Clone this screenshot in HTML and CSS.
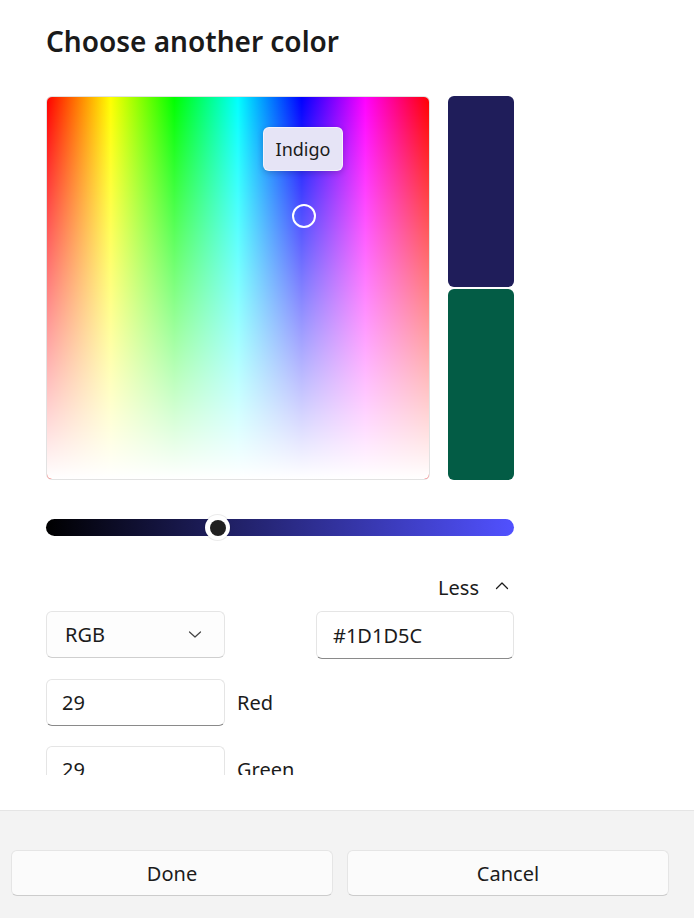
FILE: index.html
```html
<!DOCTYPE html>
<html lang="en">
<head>
<meta charset="utf-8">
<title>Choose another color</title>
<link rel="stylesheet" href="styles.css">
</head>
<body>
<div class="dialog">
  <div class="scroll">
    <div class="content">
      <h1 class="title">Choose another color</h1>
      <div class="picker">
        <div class="spectrum">
          <div class="spectrum-white"></div>
          <div class="tooltip">Indigo</div>
          <div class="marker"></div>
        </div>
        <div class="swatches">
          <div class="swatch swatch-new"></div>
          <div class="swatch swatch-old"></div>
        </div>
      </div>
      <div class="slider">
        <div class="thumb" style="left:36.75%"><div class="thumb-dot"></div></div>
      </div>
      <div class="less-row">
        <span class="less-label">Less</span>
        <svg class="chev-up" width="14" height="9" viewBox="0 0 14 9"><path d="M1.5 7.5 L7 2 L12.5 7.5" fill="none" stroke="#1b1b1b" stroke-width="1.3" stroke-linecap="round" stroke-linejoin="round"/></svg>
      </div>
      <div class="format-row">
        <div class="dropdown">
          <span>RGB</span>
          <svg class="chev-down" width="14" height="9" viewBox="0 0 14 9"><path d="M1.5 2 L7 7 L12.5 2" fill="none" stroke="#444" stroke-width="1.2" stroke-linecap="round" stroke-linejoin="round"/></svg>
        </div>
        <div class="textbox hex">#1D1D5C</div>
      </div>
      <div class="channel">
        <div class="textbox num">29</div>
        <span class="channel-label">Red</span>
      </div>
      <div class="channel">
        <div class="textbox num">29</div>
        <span class="channel-label">Green</span>
      </div>
    </div>
  </div>
  <div class="footer">
    <button class="btn">Done</button>
    <button class="btn">Cancel</button>
  </div>
</div>
</body>
</html>
```
FILE: styles.css
```css
* { box-sizing: border-box; }
html, body { margin: 0; padding: 0; background: #ffffff; }
body {
  font-family: "Noto Sans", "Open Sans", sans-serif;
  color: #1b1b1b;
}
.dialog {
  width: 694px;
  height: 918px;
  display: flex;
  flex-direction: column;
  background: #ffffff;
}
.scroll {
  height: 775px;
  overflow: hidden;
  flex: none;
}
.content {
  padding: 22px 0 0 46px;
  width: 514px;
}
.title {
  margin: 0;
  font-size: 28px;
  font-weight: 600;
  line-height: 38px;
  color: #1a1a1a;
}
.picker {
  margin-top: 36px;
  display: flex;
  gap: 18px;
  height: 384px;
}
.spectrum {
  position: relative;
  width: 384px;
  height: 384px;
  border-radius: 6px;
  border: 1px solid #e2e2e2;
  background: linear-gradient(to right, #ff0000 0%, #ffff00 16.667%, #00ff00 33.333%, #00ffff 50%, #0000ff 66.667%, #ff00ff 83.333%, #ff0000 100%);
  overflow: hidden;
}
.spectrum-white {
  position: absolute;
  inset: 0;
  background: linear-gradient(to bottom, rgba(255,255,255,0) 0%, rgba(255,255,255,0.5) 50%, rgba(255,255,255,1) 100%);
}
.tooltip {
  position: absolute;
  left: 216px;
  top: 30px;
  width: 80px;
  height: 44px;
  border-radius: 6px;
  background: #e6e4f6;
  border: 1px solid rgba(255,255,255,0.6);
  box-shadow: 0 2px 6px rgba(0,0,0,0.18);
  font-size: 18px;
  line-height: 42px;
  text-align: center;
  color: #1b1b1b;
}
.marker {
  position: absolute;
  left: 245px;
  top: 107px;
  width: 24px;
  height: 24px;
  border-radius: 50%;
  border: 2.5px solid #ffffff;
}
.swatches {
  display: flex;
  flex-direction: column;
  gap: 2px;
  width: 66px;
}
.swatch {
  flex: 1;
  border-radius: 6px;
}
.swatch-new { background: #1f1d5a; }
.swatch-old { background: #035c45; }
.slider {
  position: relative;
  margin-top: 39px;
  width: 468px;
  height: 17px;
  border-radius: 9px;
  background: linear-gradient(to right, #000000, #5151ff);
}
.thumb {
  position: absolute;
  top: 50%;
  width: 25px;
  height: 25px;
  margin: -12.5px 0 0 -12.5px;
  border-radius: 50%;
  background: #ffffff;
  box-shadow: 0 0 0 1px rgba(0,0,0,0.08);
  display: flex;
  align-items: center;
  justify-content: center;
}
.thumb-dot {
  width: 16px;
  height: 16px;
  border-radius: 50%;
  background: #202020;
}
.less-row {
  margin-top: 33px;
  width: 468px;
  height: 36px;
  display: flex;
  justify-content: flex-end;
  align-items: center;
  gap: 16px;
  padding-right: 5px;
  font-size: 20px;
}
.chev-up { margin-top: -4px; }
.format-row {
  margin-top: 6px;
  width: 468px;
  display: flex;
  justify-content: space-between;
}
.dropdown {
  width: 179px;
  height: 47px;
  border: 1px solid #e5e5e5;
  border-bottom-color: #cfcfcf;
  border-radius: 6px;
  background: #fdfdfd;
  display: flex;
  align-items: center;
  justify-content: space-between;
  padding: 0 22px 0 18px;
  font-size: 20px;
}
.textbox {
  height: 48px;
  border: 1px solid #e5e5e5;
  border-bottom: 1.5px solid #8a8a8a;
  border-radius: 6px;
  background: #ffffff;
  display: flex;
  align-items: center;
  font-size: 20px;
}
.hex {
  width: 198px;
  padding-left: 16px;
}
.channel {
  margin-top: 20px;
  display: flex;
  align-items: center;
  gap: 12px;
  font-size: 20px;
}
.num {
  width: 179px;
  height: 47px;
  padding-left: 15px;
}
.channel-label { font-size: 20px; }
.footer {
  margin-top: 35px;
  flex: 1;
  background: #f3f3f3;
  border-top: 1px solid #e5e5e5;
  display: flex;
  gap: 14px;
  padding: 39px 25px 0 11px;
  align-items: flex-start;
}
.btn {
  flex: 1;
  height: 46px;
  border: 1px solid #e5e5e5;
  border-bottom-color: #cccccc;
  border-radius: 6px;
  background: #fbfbfb;
  font-family: inherit;
  font-size: 20px;
  color: #1b1b1b;
  padding: 0;
}
```
